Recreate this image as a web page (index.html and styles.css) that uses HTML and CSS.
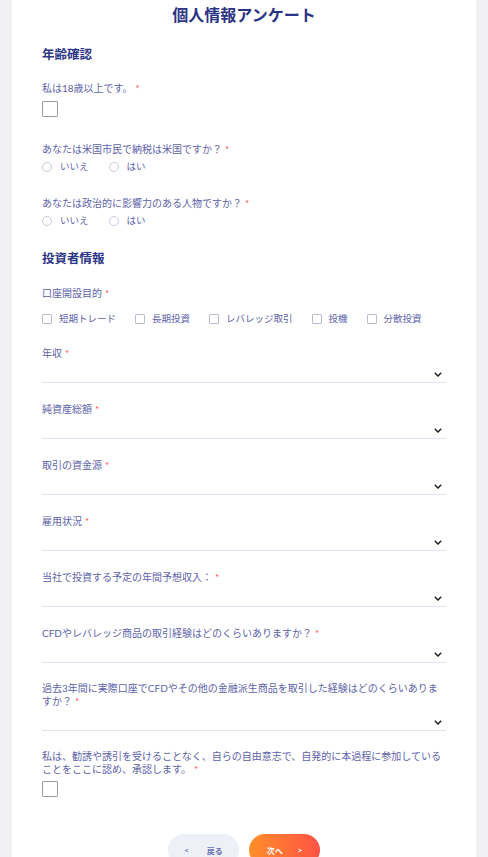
FILE: index.html
```html
<!DOCTYPE html>
<html lang="ja">
<head>
<meta charset="utf-8">
<title>個人情報アンケート</title>
<link rel="stylesheet" href="styles.css">
</head>
<body>
<div class="card">
  <h1 class="title">個人情報アンケート</h1>

  <h2 class="section s1">年齢確認</h2>

  <div class="field f-a1">
    <div class="label">私は18歳以上です。<span class="req">*</span></div>
    <span class="check-lg"></span>
  </div>

  <div class="field f-q">
    <div class="label">あなたは米国市民で納税は米国ですか？<span class="req">*</span></div>
    <div class="options">
      <span class="opt"><span class="radio"></span>いいえ</span>
      <span class="opt"><span class="radio"></span>はい</span>
    </div>
  </div>

  <div class="field f-q2">
    <div class="label">あなたは政治的に影響力のある人物ですか？<span class="req">*</span></div>
    <div class="options">
      <span class="opt"><span class="radio"></span>いいえ</span>
      <span class="opt"><span class="radio"></span>はい</span>
    </div>
  </div>

  <h2 class="section s2">投資者情報</h2>

  <div class="field f-a2">
    <div class="label">口座開設目的<span class="req">*</span></div>
    <div class="options checks">
      <span class="opt"><span class="cb"></span>短期トレード</span>
      <span class="opt"><span class="cb"></span>長期投資</span>
      <span class="opt"><span class="cb"></span>レバレッジ取引</span>
      <span class="opt"><span class="cb"></span>投機</span>
      <span class="opt"><span class="cb"></span>分散投資</span>
    </div>
  </div>

  <div class="field f-sel-first">
    <div class="label">年収<span class="req">*</span></div>
    <div class="select"><svg class="chev" width="8" height="5" viewBox="0 0 8 5"><path d="M0.8 0.8 L4 4 L7.2 0.8"/></svg></div>
  </div>

  <div class="field f-sel">
    <div class="label">純資産総額<span class="req">*</span></div>
    <div class="select"><svg class="chev" width="8" height="5" viewBox="0 0 8 5"><path d="M0.8 0.8 L4 4 L7.2 0.8"/></svg></div>
  </div>

  <div class="field f-sel">
    <div class="label">取引の資金源<span class="req">*</span></div>
    <div class="select"><svg class="chev" width="8" height="5" viewBox="0 0 8 5"><path d="M0.8 0.8 L4 4 L7.2 0.8"/></svg></div>
  </div>

  <div class="field f-sel">
    <div class="label">雇用状況<span class="req">*</span></div>
    <div class="select"><svg class="chev" width="8" height="5" viewBox="0 0 8 5"><path d="M0.8 0.8 L4 4 L7.2 0.8"/></svg></div>
  </div>

  <div class="field f-sel">
    <div class="label">当社で投資する予定の年間予想収入：<span class="req">*</span></div>
    <div class="select"><svg class="chev" width="8" height="5" viewBox="0 0 8 5"><path d="M0.8 0.8 L4 4 L7.2 0.8"/></svg></div>
  </div>

  <div class="field f-sel">
    <div class="label">CFDやレバレッジ商品の取引経験はどのくらいありますか？<span class="req">*</span></div>
    <div class="select"><svg class="chev" width="8" height="5" viewBox="0 0 8 5"><path d="M0.8 0.8 L4 4 L7.2 0.8"/></svg></div>
  </div>

  <div class="field f-sel">
    <div class="label multi">過去3年間に実際口座でCFDやその他の金融派生商品を取引した経験はどのくらいありますか？<span class="req">*</span></div>
    <div class="select"><svg class="chev" width="8" height="5" viewBox="0 0 8 5"><path d="M0.8 0.8 L4 4 L7.2 0.8"/></svg></div>
  </div>

  <div class="field f-sel">
    <div class="label multi">私は、勧誘や誘引を受けることなく、自らの自由意志で、自発的に本過程に参加していることをここに認め、承認します。<span class="req">*</span></div>
    <span class="check-lg last"></span>
  </div>

  <div class="actions">
    <button class="btn back"><span>&lt;</span><span>戻る</span></button>
    <button class="btn next"><span>次へ</span><span>&gt;</span></button>
  </div>
</div>
</body>
</html>
```

FILE: styles.css
```css
html, body {
  margin: 0;
  padding: 0;
  background: #f0f0f2;
  font-family: Lato, "Noto Sans CJK JP", sans-serif;
}

.card {
  margin: 0 12px;
  background: #ffffff;
  padding: 0 30px 40px;
  min-height: 100vh;
}

.title {
  margin: 0;
  font-size: 16px;
  line-height: 30px;
  font-weight: 700;
  text-align: center;
  color: #2b3384;
}

.section {
  margin: 0;
  font-size: 12.5px;
  line-height: 16px;
  font-weight: 700;
  color: #2d3585;
}
.s1 { margin-top: 17px; }
.s2 { margin-top: 24px; }

.field { display: flex; flex-direction: column; align-items: flex-start; }
.f-a1 { margin-top: 18px; }
.f-a2 { margin-top: 19px; }
.f-q { margin-top: 25px; }
.f-q2 { margin-top: 23px; }
.f-sel-first { margin-top: 21px; align-items: stretch; }
.f-sel { margin-top: 19px; align-items: stretch; }

.label {
  font-size: 10px;
  line-height: 14px;
  color: #5d62a8;
}
.label.multi { line-height: 13px; }

.req {
  color: #ff4d4f;
  margin-left: 3px;
}

.check-lg {
  display: block;
  width: 16px;
  height: 16px;
  margin-top: 6px;
  border: 1px solid #9a9a9a;
  border-radius: 1px;
  box-sizing: border-box;
}
.check-lg.last { margin-top: 5px; }

.options {
  display: flex;
  align-items: center;
  margin-top: 5px;
  height: 12px;
}
.options.checks { margin-top: 13px; }

.opt {
  display: flex;
  align-items: center;
  gap: 8px;
  margin-right: 20px;
  font-size: 9.5px;
  line-height: 12px;
  color: #5d62a8;
}
.checks .opt { gap: 7px; margin-right: 19px; }

.radio {
  width: 10px;
  height: 10px;
  border: 1px solid #c9cadf;
  border-radius: 50%;
  box-sizing: border-box;
}

.cb {
  width: 10px;
  height: 10px;
  border: 1px solid #b9bbd0;
  border-radius: 1px;
  box-sizing: border-box;
}

.select {
  height: 23px;
  box-sizing: border-box;
  border-bottom: 1px solid #e3e3f0;
  display: flex;
  justify-content: flex-end;
  align-items: flex-end;
  padding: 0 4px 5px 0;
}
.chev { display: block; }
.chev path {
  fill: none;
  stroke: #222222;
  stroke-width: 1.5;
}

.actions {
  display: flex;
  justify-content: center;
  gap: 10px;
  margin-top: 37px;
}

.btn {
  width: 71px;
  height: 32px;
  border: none;
  border-radius: 16px;
  display: flex;
  align-items: center;
  justify-content: center;
  font-family: Lato, "Noto Sans CJK JP", sans-serif;
  font-size: 8px;
  font-weight: 700;
  padding: 0;
}
.btn.back {
  background: #eef0f8;
  color: #6a70b5;
  gap: 18px;
}
.btn.next {
  background: linear-gradient(90deg, #ff8f28 0%, #ff5245 100%);
  color: #ffffff;
  gap: 15px;
}
```
